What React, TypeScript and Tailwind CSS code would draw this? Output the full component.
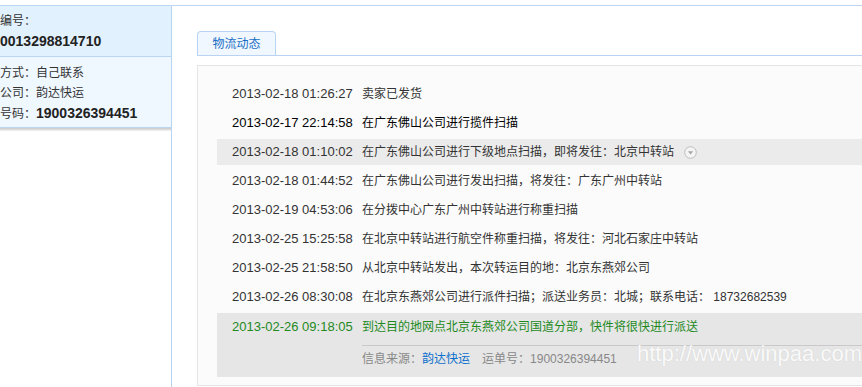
import React from "react";

const rows: { time: string; desc: string; dark?: boolean; hl?: boolean; icon?: boolean }[] = [
  { time: "2013-02-18 01:26:27", desc: "卖家已发货" },
  { time: "2013-02-17 22:14:58", desc: "在广东佛山公司进行揽件扫描", dark: true },
  { time: "2013-02-18 01:10:02", desc: "在广东佛山公司进行下级地点扫描，即将发往：北京中转站", hl: true, icon: true },
  { time: "2013-02-18 01:44:52", desc: "在广东佛山公司进行发出扫描，将发往：广东广州中转站" },
  { time: "2013-02-19 04:53:06", desc: "在分拨中心广东广州中转站进行称重扫描" },
  { time: "2013-02-25 15:25:58", desc: "在北京中转站进行航空件称重扫描，将发往：河北石家庄中转站" },
  { time: "2013-02-25 21:58:50", desc: "从北京中转站发出，本次转运目的地：北京东燕郊公司" },
  { time: "2013-02-26 08:30:08", desc: "在北京东燕郊公司进行派件扫描；派送业务员：北城；联系电话： 18732682539" },
];

export default function App() {
  return (
    <div
      className="relative w-[862px] h-[387px] overflow-hidden bg-white text-[12px] text-[#333]"
      style={{ fontFamily: '"Liberation Sans", "Noto Sans CJK SC", sans-serif' }}
    >
      <div className="mt-[5px] border-t border-[#bcd6f2] flex h-[382px]">
        {/* sidebar */}
        <div className="w-[172px] shrink-0 border-r border-[#b9d4f2]">
          <div className="h-[51px] bg-[#e2f1fe] border-b border-[#bcd6f2] pt-[5px] leading-[20px]">
            <div>编号：</div>
            <div className="text-[14px] font-bold text-[#222]">0013298814710</div>
          </div>
          <div className="h-[71px] bg-[#eff7ff] border-b border-[#bcd6f2] pt-[6px] leading-[20px]">
            <div>方式：自己联系</div>
            <div>公司：韵达快运</div>
            <div>
              号码：<span className="text-[14px] font-bold text-[#222]">1900326394451</span>
            </div>
          </div>
          <div className="h-[3px] bg-gradient-to-b from-[#c8c8c8] to-[#f4f4f4]" />
        </div>

        {/* main */}
        <div className="flex-1 pl-[25px] pt-[25px] min-w-0">
          <div className="h-[25px] border-b border-[#b9d4f2] flex">
            <div className="w-[79px] h-[24px] pt-px rounded-t-[4px] border border-b-0 border-[#b9d4f2] bg-[#f0f7ff] text-[#1a6fc4] flex items-center justify-center">
              物流动态
            </div>
          </div>
          <div className="mt-[9px] w-[720px] border border-[#e6e6e6] bg-[#fbfbfb] pt-[15px] pl-[19px] pb-[8px]">
            {rows.map((r, i) => (
              <div
                key={i}
                className={`h-[26px] mb-[3px] flex items-center pl-[15px] ${r.hl ? "bg-[#ebebeb]" : ""} ${r.dark ? "text-black" : ""}`}
              >
                <span className="w-[130px] shrink-0 text-[13px]">{r.time}</span>
                <span className="whitespace-nowrap">{r.desc}</span>
                {r.icon && (
                  <svg className="ml-[10px]" width="13" height="13" viewBox="0 0 13 13">
                    <circle cx="6.5" cy="6.5" r="5.8" fill="#f4f4f4" stroke="#bdbdbd" strokeWidth="1" />
                    <path d="M3.8 5.2 L9.2 5.2 L6.5 8.4 Z" fill="#a8a8a8" />
                  </svg>
                )}
              </div>
            ))}
            <div className="bg-[#e6e6e6] h-[64px]">
              <div className="h-[27px] flex items-center pl-[15px] text-[#1e8a1e]">
                <span className="w-[130px] shrink-0 text-[13px]">2013-02-26 09:18:05</span>
                <span className="whitespace-nowrap">到达目的地网点北京东燕郊公司国道分部，快件将很快进行派送</span>
              </div>
              <div className="ml-[145px] mt-[5px] border-t border-[#c9c9c9] h-[27px] flex items-center text-[#888] whitespace-nowrap">
                信息来源：<span className="text-[#0a6fcc]">韵达快运</span>
                <span className="ml-[12px]">运单号：1900326394451</span>
              </div>
            </div>
          </div>
        </div>
      </div>

      <div
        className="absolute left-[637px] top-[341px] text-[22px] leading-[26px] text-white/90 whitespace-nowrap"
        style={{ fontFamily: '"Liberation Sans", sans-serif', textShadow: "0 0 1px rgba(180,180,180,0.6)" }}
      >
        http://www.winpaa.com
      </div>
    </div>
  );
}
